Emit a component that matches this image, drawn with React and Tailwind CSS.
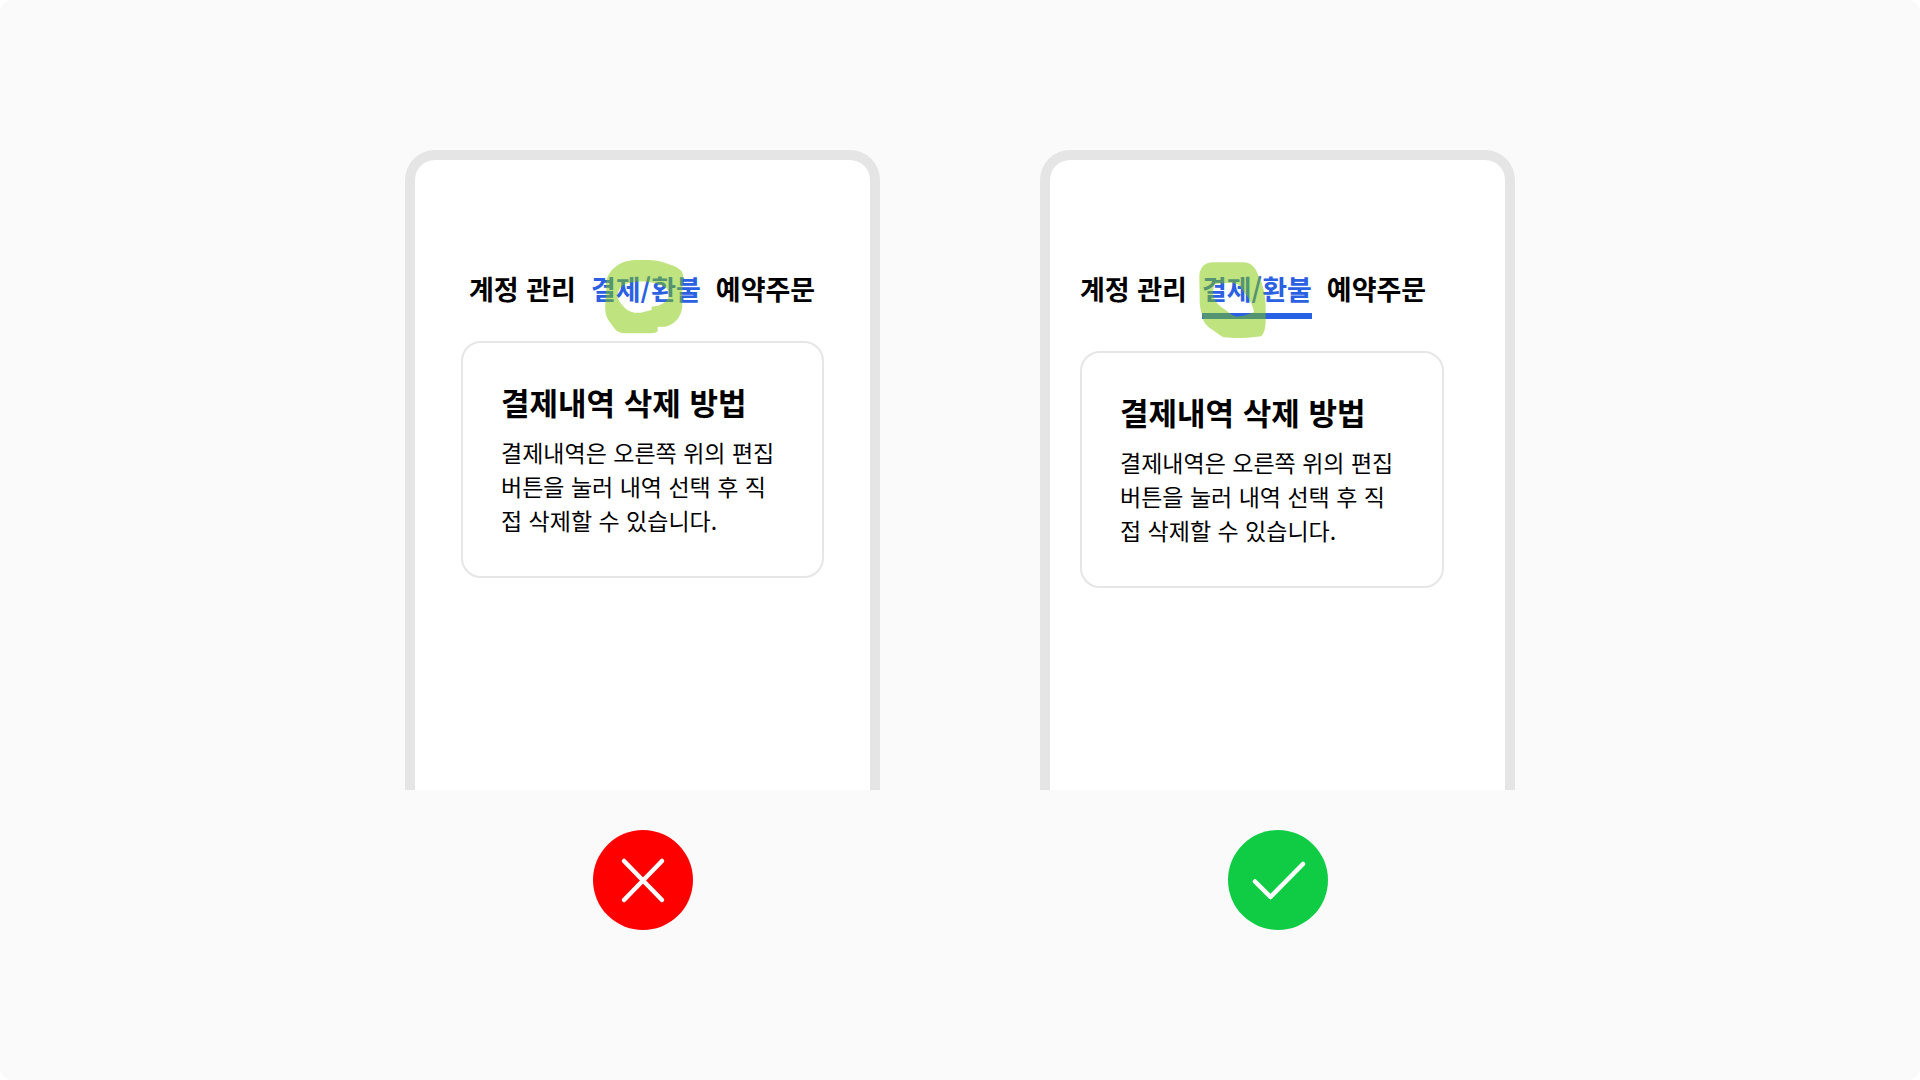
import React, { useState } from 'react';

const tabs = ['계정 관리', '결제/환불', '예약주문'];

const Card = () => (
  <article className="rounded-[20px] border-2 border-[#e6e6e6] px-[38px] pt-[37px] pb-[39px] text-black">
    <h2 className="text-[31px] leading-[44px] font-bold whitespace-nowrap">결제내역 삭제 방법</h2>
    <p className="mt-[11px] pr-2 text-[23px] leading-[34px]">
      결제내역은 오른쪽 위의 편집 버튼을 눌러 내역 선택 후 직접 삭제할 수 있습니다.
    </p>
  </article>
);

const Tabs = ({ underline }) => {
  const [active, setActive] = useState(tabs[1]);
  return (
    <div role="tablist" className="flex gap-[15px]">
      {tabs.map((tab) => {
        const selected = tab === active;
        return (
          <button
            key={tab}
            type="button"
            role="tab"
            aria-selected={selected}
            onClick={() => setActive(tab)}
            className={`cursor-pointer pb-1.5 text-[27px] leading-9 font-bold whitespace-nowrap ${
              selected ? 'text-[#2b60e3]' : 'text-black'
            } ${underline ? 'border-b-6' : ''} ${underline && selected ? 'border-[#2860e6]' : 'border-transparent'}`}
          >
            {tab}
          </button>
        );
      })}
    </div>
  );
};

const Phone = ({ className, children }) => (
  <div
    className={`aspect-[475/640] w-full rounded-t-[30px] border-x-10 border-t-10 border-[#e5e5e5] bg-white pt-[111px] ${className}`}
  >
    {children}
  </div>
);

// Marker strokes drawn over the selected tab
const RingMarker = () => (
  <svg
    aria-hidden="true"
    viewBox="646 360 234 222"
    className="pointer-events-none absolute -top-[11px] left-[136px] w-[78px]"
    fill="#7fc700"
    fillOpacity="0.5"
    fillRule="evenodd"
  >
    <path d="M735 360 C775 359 800 360 825 368 C850 376 866 382 876 394 C884 406 878 422 878 440 V498 C876 525 862 545 840 556 C830 561 820 561 804 560 V574 Q798 580 785 580 H710 C690 580 680 574 672 562 C660 544 648 535 647 510 C645 485 652 460 649 435 C650 405 665 388 688 373 C702 364 718 361 735 360Z M715 430 C735 424 755 424 775 426 C805 430 832 438 837 456 C840 472 832 484 815 493 C805 499 795 499 786 500 V510 C778 513 770 513 760 517 C740 521 720 517 708 506 C695 494 684 480 683 466 C686 448 698 434 715 430Z" />
  </svg>
);

const BlobMarker = () => (
  <svg
    aria-hidden="true"
    viewBox="509 364 202 231"
    className="pointer-events-none absolute -top-[9px] left-[119px] w-[67px]"
    fill="#7fc700"
    fillOpacity="0.5"
    fillRule="evenodd"
  >
    <path d="M550 365 H640 C668 364 679 382 686 400 C696 415 700 435 706 455 C711 480 710 510 710 545 C709 565 706 577 697 588 C680 589 660 593 640 593 C620 594 600 592 583 591 C570 584 558 574 546 566 C530 554 521 545 519 525 C513 510 510 490 511 465 L510 410 C510 380 526 366 550 365Z M556 431 C580 428 605 424 626 431 C636 442 644 454 655 468 C666 484 672 500 675 515 C660 522 640 529 620 528 C605 525 596 512 580 503 C566 492 558 484 553 471 C549 458 551 444 556 431Z" />
  </svg>
);

const Wrong = () => (
  <svg role="img" aria-label="나쁜 예" viewBox="0 0 100 100" className="mt-10 size-25">
    <circle cx="50" cy="50" r="50" fill="#ff0000" />
    <path d="M31 31 L69 70 M69 31 L31 70" stroke="#fff" strokeWidth="4.5" strokeLinecap="round" />
  </svg>
);

const Right = () => (
  <svg role="img" aria-label="좋은 예" viewBox="0 0 100 100" className="mt-10 size-25">
    <circle cx="50" cy="50" r="50" fill="#10cc45" />
    <path
      d="M27 51.5 L42.5 67 L75 34"
      fill="none"
      stroke="#fff"
      strokeWidth="4.5"
      strokeLinecap="round"
      strokeLinejoin="round"
    />
  </svg>
);

const App = () => (
  <main
    lang="ko"
    className="flex min-h-screen items-start justify-center gap-40 rounded-xl bg-[#fafafa] px-6 pt-[150px] pb-10 font-['Noto_Sans_CJK_KR',sans-serif]"
  >
    <section className="flex w-full max-w-[475px] flex-col items-center">
      <Phone className="px-[46px]">
        <div className="relative mb-7 ml-2">
          <Tabs />
          <RingMarker />
        </div>
        <Card />
      </Phone>
      <Wrong />
    </section>

    <section className="flex w-full max-w-[475px] flex-col items-center">
      <Phone className="pr-[61px] pl-[30px]">
        <div className="relative mb-8">
          <Tabs underline />
          <BlobMarker />
        </div>
        <Card />
      </Phone>
      <Right />
    </section>
  </main>
);

export default App;
